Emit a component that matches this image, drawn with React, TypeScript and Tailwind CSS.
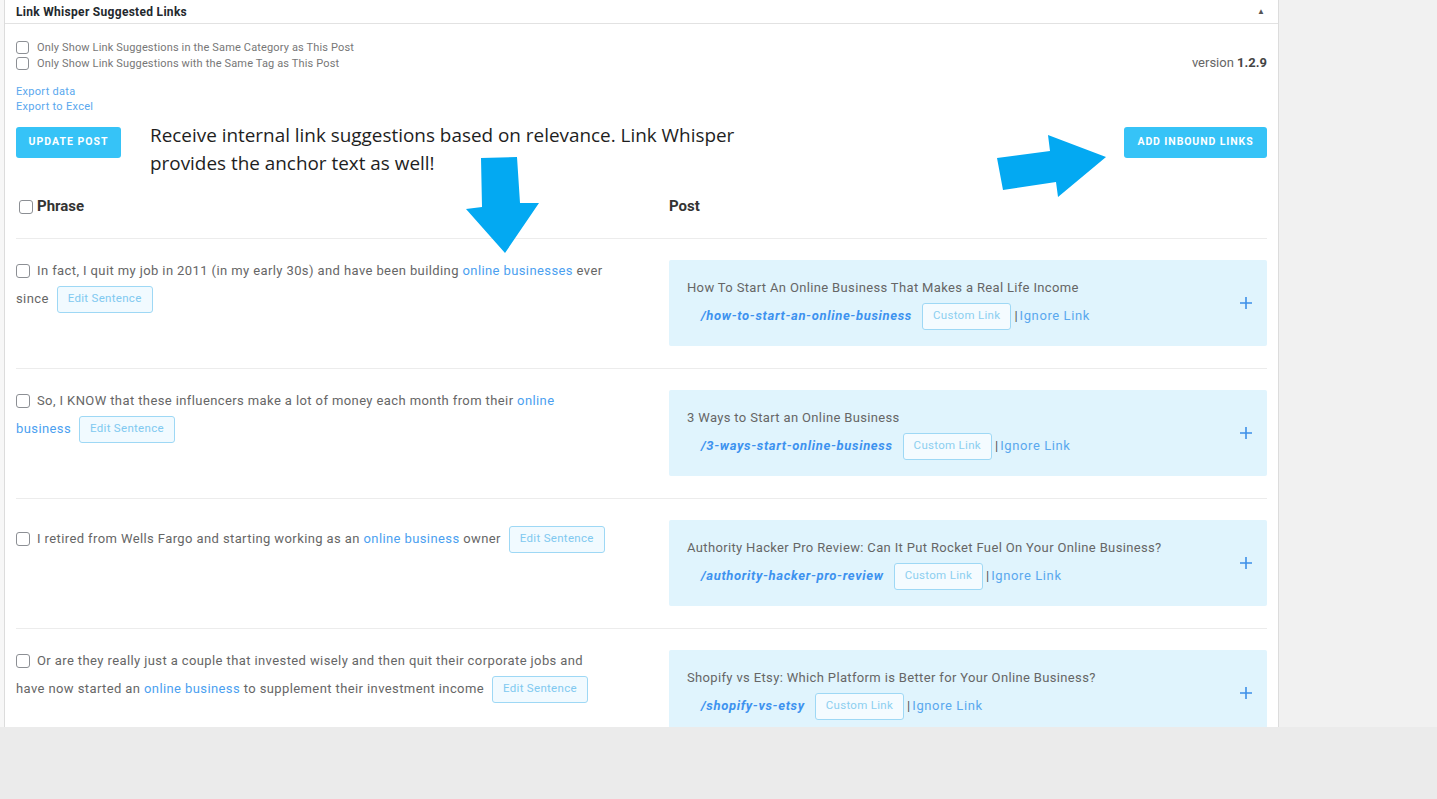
import { useState } from "react";

type Suggestion = {
  before: string;
  anchor: string;
  after: string;
  buttonFirstLine?: boolean;
  title: string;
  slug: string;
};

const suggestions: Suggestion[] = [
  {
    before: "In fact, I quit my job in 2011 (in my early 30s) and have been building ",
    anchor: "online businesses",
    after: " ever since",
    title: "How To Start An Online Business That Makes a Real Life Income",
    slug: "/how-to-start-an-online-business",
  },
  {
    before: "So, I KNOW that these influencers make a lot of money each month from their ",
    anchor: "online business",
    after: "",
    title: "3 Ways to Start an Online Business",
    slug: "/3-ways-start-online-business",
  },
  {
    before: "I retired from Wells Fargo and starting working as an ",
    anchor: "online business",
    after: " owner",
    buttonFirstLine: true,
    title: "Authority Hacker Pro Review: Can It Put Rocket Fuel On Your Online Business?",
    slug: "/authority-hacker-pro-review",
  },
  {
    before: "Or are they really just a couple that invested wisely and then quit their corporate jobs and have now started an ",
    anchor: "online business",
    after: " to supplement their investment income",
    title: "Shopify vs Etsy: Which Platform is Better for Your Online Business?",
    slug: "/shopify-vs-etsy",
  },
];

const Box = ({ checked, onChange, size }: { checked: boolean; onChange: () => void; size: string }) => (
  <input
    type="checkbox"
    checked={checked}
    onChange={onChange}
    className={`${size} appearance-none shrink-0 rounded-[3px] border border-[#8c8f94] bg-white align-middle checked:bg-[#33c3f7]`}
  />
);

const Row = ({ s }: { s: Suggestion }) => {
  const [checked, setChecked] = useState(false);
  return (
    <div className="grid h-[130px] grid-cols-[653px_598px] border-b border-[#ececec]">
      <div
        className={`pr-[61px] text-[13px] leading-[28px] tracking-[0.4px] text-[#666] ${
          s.buttonFirstLine ? "pt-[26px]" : "pt-[18px]"
        }`}
      >
        <span className="mr-[7px] inline-block align-middle leading-none">
          <Box checked={checked} onChange={() => setChecked(!checked)} size="h-[14px] w-[14px] -mt-[3px]" />
        </span>
        {s.before}
        <a className="text-[#4b9ff0]">{s.anchor}</a>
        {s.after}
        <button className="ml-[8px] inline-flex h-[27px] items-center rounded-[3px] border border-[#9ed8f5] bg-[#f1faff] px-[10px] align-middle text-[11.5px] leading-none tracking-[0.3px] text-[#80c9f0]">
          Edit Sentence
        </button>
      </div>
      <div className="pt-[21px]">
        <div className="flex h-[86px] items-center justify-between rounded-[2px] bg-[#e0f4fd] pr-[14px]">
          <div className="mt-[4px] pl-[18px]">
            <div className="text-[13px] leading-[18px] tracking-[0.35px] text-[#666]">{s.title}</div>
            <div className="mt-[5px] flex h-[28px] items-center pl-[14px] text-[13px]">
              <a className="text-[13px] font-bold italic tracking-[0.65px] text-[#3d92ef]">{s.slug}</a>
              <button className="ml-[10px] inline-flex h-[27px] items-center rounded-[3px] border border-[#9ed8f5] bg-[#f4fbff] px-[10px] text-[11.5px] leading-none tracking-[0.3px] text-[#8ccff0]">
                Custom Link
              </button>
              <span className="ml-[3px] text-[#555]">|</span>
              <a className="ml-[2px] tracking-[0.6px] text-[#5aa8ee]">Ignore Link</a>
            </div>
          </div>
          <svg width="14" height="14" viewBox="0 0 14 14" className="mt-[1px]">
            <path d="M7 1v12M1 7h12" stroke="#3d8fe8" strokeWidth="1.6" />
          </svg>
        </div>
      </div>
    </div>
  );
};

export default function App() {
  const [sameCat, setSameCat] = useState(false);
  const [sameTag, setSameTag] = useState(false);
  const [all, setAll] = useState(false);

  return (
    <div
      className="relative flex h-[799px] w-[1437px] flex-col overflow-hidden bg-[#ebebeb]"
      style={{ fontFamily: "Roboto, 'Liberation Sans', sans-serif" }}
    >
      <div className="flex h-[727px] shrink-0">
        <div className="w-[4px] bg-[#f7f7f7]" />
        <div className="w-[1275px] overflow-hidden border-x border-[#dcdcdc] bg-white">
          <div className="flex h-[24px] items-center justify-between border-b border-[#e2e2e2] px-[11px]">
            <h2 className="text-[12px] font-bold tracking-[0.3px] text-[#23282d]">Link Whisper Suggested Links</h2>
            <span className="mr-[2px] text-[8px] text-[#555]">▲</span>
          </div>

          <div className="px-[11px]">
            <div className="mt-[15px] flex items-center justify-between">
              <div className="text-[11px] tracking-[0.15px] text-[#777]">
                <label className="flex h-[16px] items-center gap-[8px]">
                  <Box checked={sameCat} onChange={() => setSameCat(!sameCat)} size="h-[13px] w-[13px]" />
                  Only Show Link Suggestions in the Same Category as This Post
                </label>
                <label className="flex h-[16px] items-center gap-[8px]">
                  <Box checked={sameTag} onChange={() => setSameTag(!sameTag)} size="h-[13px] w-[13px]" />
                  Only Show Link Suggestions with the Same Tag as This Post
                </label>
              </div>
              <div className="mt-[14px] text-[13px] text-[#666]">
                version <b className="font-bold text-[#444]">1.2.9</b>
              </div>
            </div>

            <div className="mt-[11px] text-[11px] leading-[15px] tracking-[0.3px] text-[#5aa8ee]">
              <a className="block">Export data</a>
              <a className="block">Export to Excel</a>
            </div>

            <div className="mt-[13px] flex items-center justify-between">
              <button className="h-[31px] w-[105px] rounded-[3px] bg-[#36c3f7] text-[10.5px] font-bold tracking-[1px] text-white">
                UPDATE POST
              </button>
              <button className="h-[31px] w-[143px] rounded-[3px] bg-[#36c3f7] text-[10.5px] font-bold tracking-[0.9px] text-white">
                ADD INBOUND LINKS
              </button>
            </div>

            <div className="grid h-[81px] grid-cols-[653px_598px] items-center border-b border-[#ececec] pt-[18px] text-[15px] font-bold text-[#333]">
              <label className="flex items-center gap-[4px] pl-[3px]">
                <Box checked={all} onChange={() => setAll(!all)} size="h-[14px] w-[14px]" />
                Phrase
              </label>
              <div>Post</div>
            </div>

            {suggestions.map((s) => (
              <Row key={s.slug} s={s} />
            ))}
          </div>
        </div>
        <div className="flex-1 bg-[#f1f1f1]" />
      </div>

      {/* annotation overlay */}
      <p
        className="absolute left-[150px] top-[121px] w-[640px] text-[18.9px] leading-[28px] text-[#1e1e1e]"
        style={{ fontFamily: "'Open Sans', sans-serif" }}
      >
        Receive internal link suggestions based on relevance. Link Whisper provides the anchor text as well!
      </p>
      <svg className="pointer-events-none absolute left-0 top-0" width="1437" height="799">
        <polygon points="481,158 517,157 520,203 539,203 505,253 466,209 482,207" fill="#03a9f2" />
        <polygon points="997,158 1050,151 1048,135 1106,157 1058,197 1056,182 1003,190" fill="#03a9f2" />
      </svg>
    </div>
  );
}
